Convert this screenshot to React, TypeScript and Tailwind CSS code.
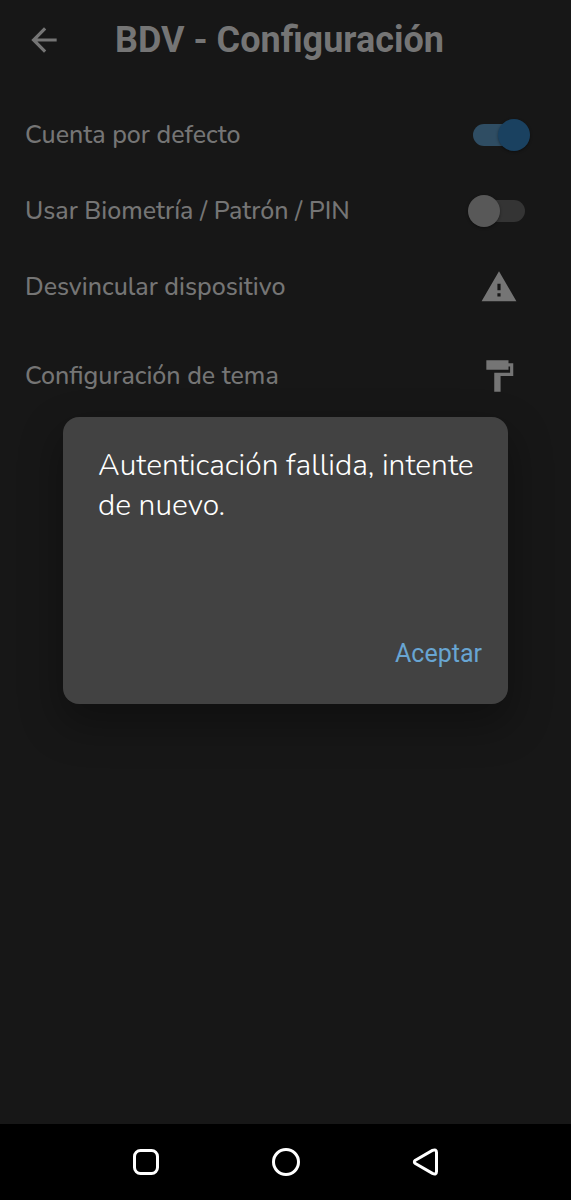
import { useState } from "react";

type SwitchRowProps = {
  label: string;
  checked: boolean;
  onChange: (value: boolean) => void;
};

function SwitchRow({ label, checked, onChange }: SwitchRowProps) {
  return (
    <label className="flex h-[76px] items-center justify-between">
      <span>{label}</span>
      <span className="flex h-8 w-[52px] shrink-0 items-center">
        <input
          type="checkbox"
          role="switch"
          className="peer sr-only"
          checked={checked}
          onChange={(e) => onChange(e.target.checked)}
        />
        <span className="flex h-[22px] w-full items-center rounded-full bg-[#343434] peer-checked:justify-end peer-checked:bg-[#2f4d63] peer-checked:[&>span]:bg-[#1a4160]">
          <span className="-mx-[5px] size-8 shrink-0 rounded-full bg-[#585858] shadow-[0_1px_3px_rgba(0,0,0,0.4)]" />
        </span>
      </span>
    </label>
  );
}

type ActionRowProps = {
  label: string;
  path: string;
};

function ActionRow({ label, path }: ActionRowProps) {
  return (
    <button type="button" className="flex h-[76px] w-full items-center justify-between text-left">
      <span>{label}</span>
      <span className="flex w-[52px] shrink-0 justify-center">
        <svg viewBox="0 0 24 24" className="size-[38px]" fill="currentColor" aria-hidden="true">
          <path d={path} />
        </svg>
      </span>
    </button>
  );
}

export default function App() {
  const [defaultAccount, setDefaultAccount] = useState(true);
  const [biometrics, setBiometrics] = useState(false);
  const [dialogOpen, setDialogOpen] = useState(true);

  return (
    <div className="relative flex min-h-screen flex-col bg-[#171717] text-[#757575]">
      {/* App bar */}
      <header className="flex h-20 items-center gap-[52px] px-[25px]">
        <button type="button" aria-label="Volver">
          <svg viewBox="0 0 24 24" className="size-[38px]" fill="currentColor" aria-hidden="true">
            <path d="M20 11H7.83l5.59-5.59L12 4l-8 8 8 8 1.41-1.41L7.83 13H20v-2z" />
          </svg>
        </button>
        <h1 className="font-[Roboto,sans-serif] text-4xl leading-10 font-bold">BDV - Configuración</h1>
      </header>

      {/* Settings */}
      <main className="flex-1 pt-[17px] pr-[46px] pl-[25px] font-[Nunito,Lato,sans-serif] text-[25px] leading-8 font-medium">
        <SwitchRow label="Cuenta por defecto" checked={defaultAccount} onChange={setDefaultAccount} />
        <SwitchRow label="Usar Biometría / Patrón / PIN" checked={biometrics} onChange={setBiometrics} />
        <ActionRow
          label="Desvincular dispositivo"
          path="M1 21h22L12 2 1 21zm12-3h-2v-2h2v2zm0-4h-2v-4h2v4z"
        />
        <div className="mt-[13px]">
          <ActionRow label="Configuración de tema" path="M18 4V2H4v6h14V6h1v4H9v12h4V12h8V4h-3z" />
        </div>
      </main>

      {/* System navigation */}
      <nav className="flex h-[76px] items-center justify-center gap-28 bg-black text-white">
        <button type="button" aria-label="Recientes">
          <svg viewBox="0 0 28 28" className="size-7" fill="none" stroke="currentColor" strokeWidth="3" aria-hidden="true">
            <rect x="2.5" y="2.5" width="23" height="23" rx="6" />
          </svg>
        </button>
        <button type="button" aria-label="Inicio">
          <svg viewBox="0 0 28 28" className="size-7" fill="none" stroke="currentColor" strokeWidth="3" aria-hidden="true">
            <circle cx="14" cy="14" r="12.5" />
          </svg>
        </button>
        <button type="button" aria-label="Atrás">
          <svg viewBox="0 0 28 28" className="size-7" fill="none" stroke="currentColor" strokeWidth="3" aria-hidden="true">
            <path d="M3.4 12.2 20.4 2.4Q24.5 .8 24.5 4.5V23.5Q24.5 27.2 20.4 25.4L3.4 15.6Q1.3 13.9 3.4 12.2Z" />
          </svg>
        </button>
      </nav>

      {dialogOpen && (
        <div className="absolute inset-0 flex items-center justify-center px-[63px] pb-20">
          <div
            role="alertdialog"
            aria-describedby="auth-message"
            className="flex min-h-[287px] w-full max-w-lg flex-col justify-between rounded-2xl bg-[#424242] pt-[29px] pr-[26px] pb-[26px] pl-[35px] shadow-[0_18px_40px_4px_rgba(0,0,0,0.3)]"
          >
            <p id="auth-message" className="font-[Nunito,Lato,sans-serif] text-[30px] leading-10 font-light text-white">
              Autenticación fallida, intente de nuevo.
            </p>
            <button
              type="button"
              className="h-12 self-end font-[Roboto,sans-serif] text-[25px] text-[#68a5d2]"
              onClick={() => setDialogOpen(false)}
            >
              Aceptar
            </button>
          </div>
        </div>
      )}
    </div>
  );
}
